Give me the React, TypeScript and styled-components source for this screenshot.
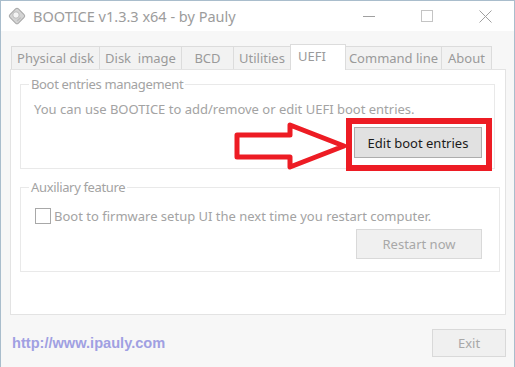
import React from "react";
import styled, { createGlobalStyle } from "styled-components";

const Global = createGlobalStyle`
  html, body { margin: 0; padding: 0; background: #ffffff; }
  * { box-sizing: border-box; }
`;

const FONT = `"Segoe UI", "Noto Sans", "Open Sans", sans-serif`;

const Window = styled.div`
  width: 515px;
  height: 367px;
  border: 1px solid #a9bdcc;
  border-bottom: none;
  background: #f7f7f7;
  display: flex;
  flex-direction: column;
  font-family: ${FONT};
  overflow: hidden;
`;

const TitleBar = styled.div`
  height: 30px;
  flex: none;
  background: #ffffff;
  display: flex;
  align-items: center;
  padding-left: 6px;
`;

const Title = styled.span`
  margin-left: 6px;
  font-size: 14.5px;
  color: #9c9c9c;
`;

const Controls = styled.div`
  margin-left: auto;
  display: flex;
  height: 100%;
`;

const CaptionButton = styled.div`
  width: 58px;
  height: 100%;
  display: flex;
  align-items: center;
  justify-content: center;
`;

const Body = styled.div`
  flex: 1;
  display: flex;
  flex-direction: column;
  padding: 12px 8px 0 9px;
`;

const TabStrip = styled.div`
  display: flex;
  align-items: flex-end;
  height: 26px;
  padding-left: 1px;
  position: relative;
  z-index: 1;
`;

const Tab = styled.div<{ $w: number; $active?: boolean }>`
  width: ${(p) => p.$w}px;
  height: ${(p) => (p.$active ? 26 : 23)}px;
  margin-bottom: ${(p) => (p.$active ? -1 : 0)}px;
  margin-right: -1px;
  border: 1px solid #dcdcdc;
  border-bottom: none;
  background: ${(p) => (p.$active ? "#ffffff" : "#f2f2f2")};
  color: #9a9a9a;
  font-size: 13px;
  display: flex;
  align-items: ${(p) => (p.$active ? "flex-start" : "center")};
  padding: ${(p) => (p.$active ? "2px 0 0 7px" : "0")};
  justify-content: ${(p) => (p.$active ? "flex-start" : "center")};
  white-space: nowrap;
`;

const Panel = styled.div`
  height: 246px;
  background: #ffffff;
  border: 1px solid #e3e3e3;
  padding: 14px 0 0 9px;
  display: flex;
  flex-direction: column;
`;

const Group = styled.div<{ $w: number; $h: number; $gap?: number }>`
  position: relative;
  width: ${(p) => p.$w}px;
  height: ${(p) => p.$h}px;
  margin-top: ${(p) => p.$gap ?? 0}px;
  border: 1px solid #e9e9e9;
  display: flex;
  flex-direction: column;
`;

const Legend = styled.span`
  position: absolute;
  top: -10px;
  left: 8px;
  padding: 0 2px;
  background: #ffffff;
  font-size: 13px;
  letter-spacing: -0.35px;
  line-height: 18px;
  color: #a3a3a3;
`;

const Text = styled.div`
  font-size: 13px;
  line-height: 18px;
  color: #a3a3a3;
  white-space: nowrap;
`;

const Info = styled(Text)`
  padding: 15px 0 0 13px;
`;

const ButtonRow = styled.div<{ $top: number; $right: number }>`
  display: flex;
  justify-content: flex-end;
  padding-right: ${(p) => p.$right}px;
  margin-top: ${(p) => p.$top}px;
`;

const Button = styled.div<{ $w: number; $h: number; $disabled?: boolean }>`
  position: relative;
  width: ${(p) => p.$w}px;
  height: ${(p) => p.$h}px;
  background: ${(p) => (p.$disabled ? "#f0f0f0" : "#e1e1e1")};
  border: 1px solid ${(p) => (p.$disabled ? "#d9d9d9" : "#adadad")};
  color: ${(p) => (p.$disabled ? "#a8a8a8" : "#1b1b1b")};
  font-size: 13px;
  display: flex;
  align-items: center;
  justify-content: center;
  white-space: nowrap;
`;

const Highlight = styled.div`
  position: absolute;
  left: -9px;
  top: -10px;
  width: 146px;
  height: 53px;
  border: 6px solid #ed1c24;
  pointer-events: none;
`;

const ArrowSvg = styled.svg`
  position: absolute;
  left: -121px;
  top: -6px;
  overflow: visible;
`;

const CheckRow = styled.div`
  display: flex;
  align-items: center;
  padding: 19px 0 0 14px;
`;

const CheckBox = styled.span`
  width: 16px;
  height: 16px;
  border: 1px solid #a8a8a8;
  background: #ffffff;
  margin-right: 3px;
  flex: none;
`;

const Footer = styled.div`
  display: flex;
  align-items: center;
  justify-content: space-between;
  margin-top: 14px;
  padding-left: 2px;
`;

const Link = styled.span`
  font-family: "Liberation Sans", Arial, sans-serif;
  font-weight: bold;
  font-size: 14.6px;
  color: #a0a0e2;
`;

const AppIcon = () => (
  <svg width="20" height="20" viewBox="0 0 20 20">
    <rect x="4" y="4" width="12" height="12" rx="2" transform="rotate(45 10 10)" fill="#d4d4d4" stroke="#a8a8a8" strokeWidth="1" />
    <circle cx="9" cy="9" r="3.2" fill="#f4f4f4" stroke="#b0b0b0" strokeWidth="0.8" />
    <rect x="9" y="13" width="5" height="1.5" transform="rotate(-45 11 13)" fill="#bdbdbd" />
  </svg>
);

export default function App() {
  return (
    <>
      <Global />
      <Window>
        <TitleBar>
          <AppIcon />
          <Title>BOOTICE v1.3.3 x64 - by Pauly</Title>
          <Controls>
            <CaptionButton>
              <svg width="12" height="12" viewBox="0 0 12 12">
                <line x1="0" y1="6.5" x2="12" y2="6.5" stroke="#a0a0a0" strokeWidth="1" />
              </svg>
            </CaptionButton>
            <CaptionButton>
              <svg width="12" height="12" viewBox="0 0 12 12">
                <rect x="0.5" y="0.5" width="11" height="11" fill="none" stroke="#c4c4c4" strokeWidth="1" />
              </svg>
            </CaptionButton>
            <CaptionButton>
              <svg width="13" height="13" viewBox="0 0 13 13">
                <path d="M0.5 0.5 L12.5 12.5 M12.5 0.5 L0.5 12.5" stroke="#a0a0a0" strokeWidth="1" />
              </svg>
            </CaptionButton>
          </Controls>
        </TitleBar>
        <Body>
          <TabStrip>
            <Tab $w={89}>Physical disk</Tab>
            <Tab $w={83}>Disk&nbsp; image</Tab>
            <Tab $w={53}>BCD</Tab>
            <Tab $w={58}>Utilities</Tab>
            <Tab $w={56} $active>UEFI</Tab>
            <Tab $w={97}>Command line</Tab>
            <Tab $w={51}>About</Tab>
          </TabStrip>
          <Panel>
            <Group $w={475} $h={85}>
              <Legend>Boot entries management</Legend>
              <Info>You can use BOOTICE to add/remove or edit UEFI boot entries.</Info>
              <ButtonRow $top={9} $right={12}>
                <Button $w={128} $h={31}>
                  <ArrowSvg width="114" height="48" viewBox="0 0 114 48">
                    <path
                      d="M3 13 L56 13 L56 3 L110 24 L56 45 L56 35 L3 35 Z"
                      fill="#ffffff"
                      stroke="#ed1c24"
                      strokeWidth="5"
                      strokeLinejoin="round"
                    />
                  </ArrowSvg>
                  Edit boot entries
                  <Highlight />
                </Button>
              </ButtonRow>
            </Group>
            <Group $w={480} $h={85} $gap={18}>
              <Legend>Auxiliary feature</Legend>
              <CheckRow>
                <CheckBox />
                <Text>Boot to firmware setup UI the next time you restart computer.</Text>
              </CheckRow>
              <ButtonRow $top={4} $right={17}>
                <Button $w={126} $h={30} $disabled>
                  Restart now
                </Button>
              </ButtonRow>
            </Group>
          </Panel>
          <Footer>
            <Link>http://www.ipauly.com</Link>
            <Button $w={74} $h={28} $disabled>
              Exit
            </Button>
          </Footer>
        </Body>
      </Window>
    </>
  );
}
